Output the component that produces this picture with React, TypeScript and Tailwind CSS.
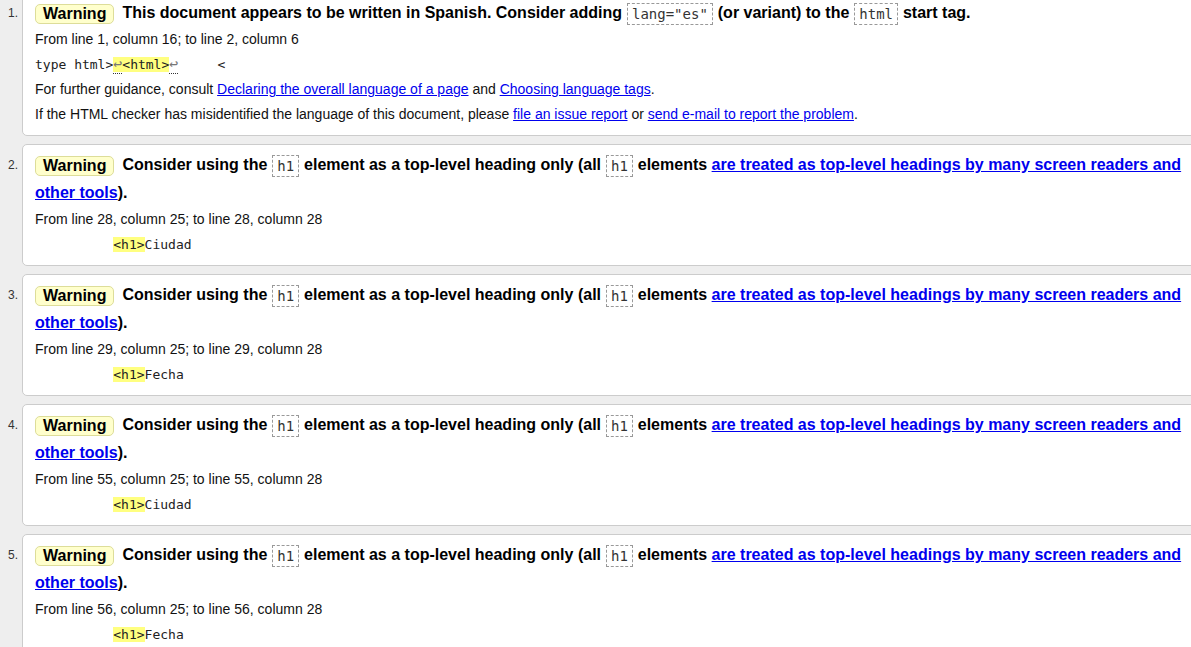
const H1_MSG_LINK = 'are treated as top-level headings by many screen readers and other tools'

function Code({ children }: { children: React.ReactNode }) {
  return (
    <code className="mx-[0.5px] inline-block border border-dashed border-[#999999] px-[4px] align-middle font-['DejaVu_Sans_Mono',monospace] text-[14px] font-normal leading-[20px] text-[#333333]">
      {children}
    </code>
  )
}

function Badge() {
  return (
    <span className="mr-[8px] inline-block rounded-[5px] border border-[#dddd99] bg-[#ffffcc] px-[7px] align-middle leading-[18px] text-black">
      Warning
    </span>
  )
}

function Item({ n, first, children }: { n: number; first?: boolean; children: React.ReactNode }) {
  return (
    <li className={`flex ${first ? '-mt-[8px]' : ''}`}>
      <div className="w-[22px] shrink-0 pl-[8px] pt-[7px] text-[12px] leading-[28px] text-[#333333]">{n}.</div>
      <div className="w-[1205px] shrink-0 rounded-[5px] border border-[#cccccc] bg-white px-[12px] pb-[8px] pt-[6px] text-[#111111]">
        {children}
      </div>
    </li>
  )
}

function Ret() {
  return <span className="border-b border-dotted border-[#333333] text-[15px] text-[#777777]">↩</span>
}

function H1Item({ n, line, col1, col2, word }: { n: number; line: number; col1: number; col2: number; word: string }) {
  return (
    <Item n={n}>
      <p className="text-[16px] font-bold leading-[28px] text-black">
        <Badge />
        Consider using the <Code>h1</Code> element as a top-level heading only (all <Code>h1</Code> elements{' '}
        <a href="#" className="text-[#0000ee] underline">{H1_MSG_LINK}</a>).
      </p>
      <p className="text-[14px] leading-[25px]">
        From line {line}, column {col1}; to line {line}, column {col2}
      </p>
      <p className="whitespace-pre font-['DejaVu_Sans_Mono',monospace] text-[13px] leading-[25px] text-[#222222]">
        {'          '}
        <span className="bg-[#ffff80]">{'<h1>'}</span>
        {word}
      </p>
    </Item>
  )
}

export default function App() {
  return (
    <div className="h-[647px] w-[1191px] overflow-hidden bg-[#eeeeee] font-['Liberation_Sans',Arial,sans-serif]">
      <ol className="flex flex-col gap-[8px]">
        <Item n={1} first>
          <p className="text-[16px] font-bold leading-[28px] text-black">
            <Badge />
            This document appears to be written in Spanish. Consider adding <Code>lang="es"</Code> (or variant) to the{' '}
            <Code>html</Code> start tag.
          </p>
          <p className="text-[14px] leading-[25px]">From line 1, column 16; to line 2, column 6</p>
          <p className="whitespace-pre font-['DejaVu_Sans_Mono',monospace] text-[13px] leading-[25px] text-[#222222]">
            {'type html>'}
            <span className="bg-[#ffff80]">
              <Ret />
              {'<html>'}
            </span>
            <Ret />
            {'     <'}
          </p>
          <p className="text-[14px] leading-[25px]">
            For further guidance, consult{' '}
            <a href="#" className="text-[#0000ee] underline">Declaring the overall language of a page</a> and{' '}
            <a href="#" className="text-[#0000ee] underline">Choosing language tags</a>.
          </p>
          <p className="text-[14px] leading-[25px]">
            If the HTML checker has misidentified the language of this document, please{' '}
            <a href="#" className="text-[#0000ee] underline">file an issue report</a> or{' '}
            <a href="#" className="text-[#0000ee] underline">send e-mail to report the problem</a>.
          </p>
        </Item>
        <H1Item n={2} line={28} col1={25} col2={28} word="Ciudad" />
        <H1Item n={3} line={29} col1={25} col2={28} word="Fecha" />
        <H1Item n={4} line={55} col1={25} col2={28} word="Ciudad" />
        <H1Item n={5} line={56} col1={25} col2={28} word="Fecha" />
      </ol>
    </div>
  )
}
